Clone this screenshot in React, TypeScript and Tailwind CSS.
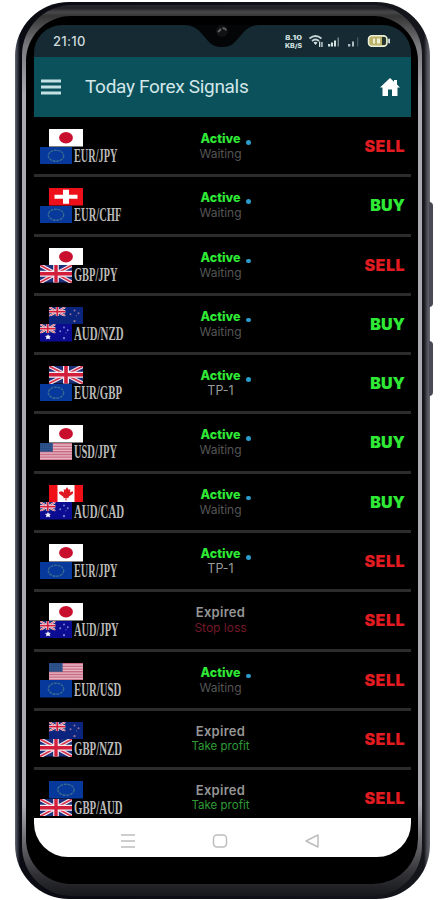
import React from "react";

type Code = "jp" | "eu" | "ch" | "gb" | "nz" | "au" | "us" | "ca";

const Union = () => (
  <>
    <rect width="34" height="18" fill="#1c2f78" />
    <path d="M0 0L34 18M34 0L0 18" stroke="#f1e6ee" strokeWidth="4" />
    <path d="M0 0L34 18M34 0L0 18" stroke="#d8304a" strokeWidth="1.6" />
    <path d="M17 0V18M0 9H34" stroke="#f4edf2" strokeWidth="6" />
    <path d="M17 0V18M0 9H34" stroke="#d41f3c" strokeWidth="3.6" />
  </>
);

const Flag = ({ code, className }: { code: Code; className: string }) => (
  <svg viewBox="0 0 34 18" preserveAspectRatio="none" className={className}>
    {code === "jp" && (
      <>
        <rect width="34" height="18" fill="#fff" />
        <ellipse cx="17" cy="9" rx="6.9" ry="5.8" fill="#c8102e" />
      </>
    )}
    {code === "eu" && (
      <>
        <rect width="34" height="18" fill="#07389b" />
        <ellipse cx="17" cy="9" rx="8.2" ry="5.7" fill="none" stroke="#396b91" strokeWidth="1.4" strokeDasharray="3 .8" />
      </>
    )}
    {code === "ch" && (
      <>
        <rect width="34" height="18" fill="#ed101a" />
        <path d="M17 1.800V16.200" stroke="#fff" strokeWidth="6" />
        <path d="M5.500 9H28.500" stroke="#fff" strokeWidth="4.200" />
      </>
    )}
    {code === "ca" && (
      <>
        <rect width="34" height="18" fill="#fff" />
        <path d="M0 0H8.500V18H0zM25.500 0H34V18H25.500z" fill="#ef1018" />
        <path d="M17 2l1.600 3 1.700-.7-.3 3.500 2.200-1.400 1 .8-.5 1.800-4.300 3.300.2 1.200-2.100-.4V16h-1v-2.900l-2.100.4.2-1.200L9.300 9 8.800 7.200l3-.8 2.200 1.400-.3-3.500 1.700.7z" transform="translate(1 0)" fill="#e01820" />
      </>
    )}
    {code === "us" && (
      <>
        <rect width="34" height="18" fill="#e5b6c5" />
        <path d="M0 .7H34M0 3.500H34M0 6.300H34M0 9H34M0 11.800H34M0 14.500H34M0 17.300H34" stroke="#cc6c82" strokeWidth="1.400" />
        <rect width="13.600" height="9" fill="#284c86" />
        <path d="M1 2.200H13M1 4.500H13M1 6.800H13" stroke="#4a6a9a" strokeWidth=".7" strokeDasharray="1 1.200" />
      </>
    )}
    {code === "gb" && <Union />}
    {(code === "au" || code === "nz") && (
      <>
        <rect width="34" height="18" fill={code === "au" ? "#0b0c91" : "#0b257e"} />
        <svg width="16.500" height="9.500" viewBox="0 0 34 18" preserveAspectRatio="none">
          <Union />
        </svg>
        {code === "au" && <path d="M8.500 11l.7 1.500 1.700-.1-1 1.300.6 1.600-2-.6-1.700.6.3-1.600-1.200-1.200 1.900 0z" fill="#fff" stroke="#fff" strokeWidth=".6" />}
        <g fill={code === "au" ? "#7d85d0" : "#8f7199"}>
          <circle cx="25.500" cy="3.500" r="1" />
          <circle cx="21.500" cy="7.500" r="1" />
          <circle cx="29.500" cy="6.500" r="1" />
          <circle cx="25.500" cy="14.500" r="1.200" />
          <circle cx="27.500" cy="9" r=".6" />
        </g>
      </>
    )}
  </svg>
);

type State = "wait" | "tp" | "stop" | "profit";
const signals: { top: Code; bottom: Code; pair: string; state: State; side: "SELL" | "BUY" }[] = [
  { top: "jp", bottom: "eu", pair: "EUR/JPY", state: "wait", side: "SELL" },
  { top: "ch", bottom: "eu", pair: "EUR/CHF", state: "wait", side: "BUY" },
  { top: "jp", bottom: "gb", pair: "GBP/JPY", state: "wait", side: "SELL" },
  { top: "nz", bottom: "au", pair: "AUD/NZD", state: "wait", side: "BUY" },
  { top: "gb", bottom: "eu", pair: "EUR/GBP", state: "tp", side: "BUY" },
  { top: "jp", bottom: "us", pair: "USD/JPY", state: "wait", side: "BUY" },
  { top: "ca", bottom: "au", pair: "AUD/CAD", state: "wait", side: "BUY" },
  { top: "jp", bottom: "eu", pair: "EUR/JPY", state: "tp", side: "SELL" },
  { top: "jp", bottom: "au", pair: "AUD/JPY", state: "stop", side: "SELL" },
  { top: "us", bottom: "eu", pair: "EUR/USD", state: "wait", side: "SELL" },
  { top: "nz", bottom: "gb", pair: "GBP/NZD", state: "profit", side: "SELL" },
  { top: "eu", bottom: "gb", pair: "GBP/AUD", state: "profit", side: "SELL" },
];

const details: Record<State, { text: string; style: string }> = {
  wait: { text: "Waiting", style: "text-[#555555] text-[12px]" },
  tp: { text: "TP-1", style: "text-[#9a9a9a] text-[12.500px]" },
  stop: { text: "Stop loss", style: "text-[#74192a] text-[12px]" },
  profit: { text: "Take profit", style: "text-[#2f9b37] text-[11.500px]" },
};

const pairScale: Record<string, string> = {
  "EUR/JPY": "scale-x-[.57]",
  "EUR/CHF": "scale-x-[.585]",
  "GBP/JPY": "scale-x-[.58]",
  "AUD/NZD": "scale-x-[.605]",
  "EUR/GBP": "scale-x-[.6]",
  "USD/JPY": "scale-x-[.58]",
  "AUD/CAD": "scale-x-[.605]",
  "AUD/JPY": "scale-x-[.58]",
  "EUR/USD": "scale-x-[.6]",
  "GBP/NZD": "scale-x-[.6]",
  "GBP/AUD": "scale-x-[.6]",
};

const Row = ({ s }: { s: (typeof signals)[number] }) => {
  const active = s.state === "wait" || s.state === "tp";
  return (
    <div className="grid h-[59.300px] shrink-0 grid-cols-[127px_119px_1fr] border-b-[3px] border-[#2c2c2c]">
      <div className="flex pt-[11px] pl-[6px]">
        <div className="flex w-[34px] shrink-0 flex-col">
          <Flag code={s.top} className="ml-[9px] h-[17.500px] w-[34px] shrink-0" />
          <Flag code={s.bottom} className="h-[17.500px] w-[32px] shrink-0" />
        </div>
        <span className={`mt-[17px] h-5 origin-left font-['Liberation_Serif',serif] text-[18px] leading-5 font-bold whitespace-nowrap text-[#b9b9b9] ${pairScale[s.pair]}`}>{s.pair}</span>
      </div>
      <div className="relative pt-[13px] text-center">
        <div className={`leading-[15px] ${active ? "text-[12.500px] font-extrabold text-[#2fe936]" : "text-[13px] font-semibold tracking-[.3px] text-[#969696]"}`}>{active ? "Active" : "Expired"}</div>
        <div className={`leading-[15px] ${details[s.state].style}`}>{details[s.state].text}</div>
        {active && <i className="absolute top-[22px] left-[85px] size-[4.500px] rounded-full bg-[#2b9ccb]" />}
      </div>
      <div className={`origin-right pt-[17px] pr-[6px] text-right text-[16px] leading-[22px] font-black ${s.side === "SELL" ? "tracking-[.5px] text-[#e11b20]" : "text-[#2fe936]"}`}>{s.side}</div>
    </div>
  );
};

const StatusIcons = () => (
  <svg viewBox="0 0 106 16" className="h-4 w-[106px]" fill="#d4e2e2">
    <text x="0" y="7" fontSize="6" fontWeight="800" textLength="17" lengthAdjust="spacingAndGlyphs">8.10</text>
    <text x="0" y="14.500" fontSize="6" fontWeight="800" textLength="17" lengthAdjust="spacingAndGlyphs">KB/S</text>
    <g fill="none" stroke="#c5d4d4" strokeWidth="1.700">
      <path d="M24.500 5.500Q30.500.5 36.500 5.500M27 8Q30.500 5 34 8" />
    </g>
    <path d="M28.500 9.500Q30.500 8 32.500 9.500L30.500 12zM34 8.500h1.300V14H34zM36.300 9h1.300v5h-1.300z" />
    <path d="M43 11h2.300v2.500H43zM46 9.500h2v4h-2zM49 7.500h2v6h-2z" />
    <path d="M52.500 4.500h1.500v9h-1.500z" opacity=".5" />
    <path d="M63 11h2.300v2.500H63zM67 8.500h2v5h-2z" opacity=".8" />
    <path d="M72 4.500h1.300v9H72z" opacity=".25" />
    <rect x="83.500" y="2.800" width="18.500" height="10.400" rx="3.500" fill="#bcb36a" stroke="#edf0d8" strokeWidth="1.500" />
    <path d="M97 4h2.500q1.500 0 1.500 2v4q0 2-1.500 2H97z" fill="#26352f" />
    <path d="M88 5.500h2v5h-2zM92 5.500h3v5h-3z" fill="#f0efd6" />
    <rect x="103.200" y="5.500" width="1.800" height="5" rx=".9" />
  </svg>
);

export default function App() {
  return (
    <div className="relative h-[900px] w-[443px] overflow-hidden bg-white pt-[2px] pl-[15px] font-[Inter,sans-serif]">
      <i className="absolute top-[202px] left-[429px] h-[105px] w-[3.500px] rounded-r-sm bg-[#474a55]" />
      <i className="absolute top-[341px] left-[429px] h-[55px] w-[3.500px] rounded-r-sm bg-[#474a55]" />
      <div className="h-[897px] w-[415px] rounded-[54px] bg-[linear-gradient(90deg,#656971_0,#3d414c_2px,#090a12_5px,#15161c_calc(100%-6px),#4d4d55_calc(100%-3px),#6a6a72_100%)] p-[3px_8px_3px_7px]">
        <div className="h-[891px] rounded-[50px] bg-[linear-gradient(180deg,#252733_0,#202024_3px,#48484a_7px,#353535_11px,#77777c_40px,#aaaab0_90px,#aaaab0_800px,#303034_870px,#17181b_100%)] p-[11px_4px_12px_4px]">
          <div className="h-[868px] rounded-[45px] bg-black p-[9px_6px_0_8px]">
            <div className="relative flex h-[832px] w-[377px] flex-col overflow-hidden rounded-t-[28px] rounded-b-[34px] bg-black">
              <div className="flex h-8 shrink-0 items-center justify-between bg-[#152a32] pr-[20px] pl-[19px] text-[#cedbdd]">
                <span className="pt-px text-[13px] font-medium tracking-[.3px]">21:10</span>
                <StatusIcons />
              </div>
              <svg className="absolute top-0 left-[150px] h-6 w-[76px]" viewBox="0 0 76 24">
                <path d="M0 0Q11 0 18 9L25 17Q29 22 38 22Q47 22 51 17L58 9Q65 0 76 0z" fill="#030506" />
                <circle cx="38" cy="6" r="6" fill="#111214" />
                <path d="M34 7L37 4M38.500 3.500Q41 2.500 42 5.500" fill="none" stroke="#626669" strokeWidth="1.800" />
              </svg>
              <div className="flex h-[60px] shrink-0 items-center bg-[#0b515c] pr-[11px] pl-[7px]">
                <svg viewBox="0 0 20 16" className="h-4 w-5"><path d="M0 2H20M0 8H20M0 14H20" stroke="#c3e1e2" strokeWidth="2.800" /></svg>
                <span className="ml-[24px] font-[Roboto,sans-serif] text-[19px] tracking-[-.31px] text-[#d2e7e8]">Today Forex Signals</span>
                <svg viewBox="0 0 20 18" className="ml-auto h-[18px] w-5" fill="#fff"><path d="M10 0L14 3.700V2H17V6.600L20 9.500H17.500V18H12V11.500H8V18H2.500V9.500H0z" /></svg>
              </div>
              <div className="flex min-h-0 flex-1 flex-col overflow-hidden pt-px">
                {signals.map((s, i) => <Row key={i} s={s} />)}
              </div>
              <div className="flex h-[39px] shrink-0 items-center justify-center gap-[77px] bg-white pt-[7px] pr-[5px]">
                <svg viewBox="0 0 14 16" className="h-4 w-[14px]"><path d="M0 2H14M0 8H14M0 14H14" stroke="#bdbdbd" strokeWidth="1.500" /></svg>
                <svg viewBox="0 0 16 16" className="h-4 w-4"><rect x="1.500" y="2" width="13" height="12" rx="3.500" fill="none" stroke="#bdbdbd" strokeWidth="1.500" /></svg>
                <svg viewBox="0 0 14 16" className="h-4 w-[14px]"><path d="M1 8L13 2V14z" fill="none" stroke="#bdbdbd" strokeWidth="1.500" strokeLinejoin="round" /></svg>
              </div>
            </div>
          </div>
        </div>
      </div>
    </div>
  );
}
